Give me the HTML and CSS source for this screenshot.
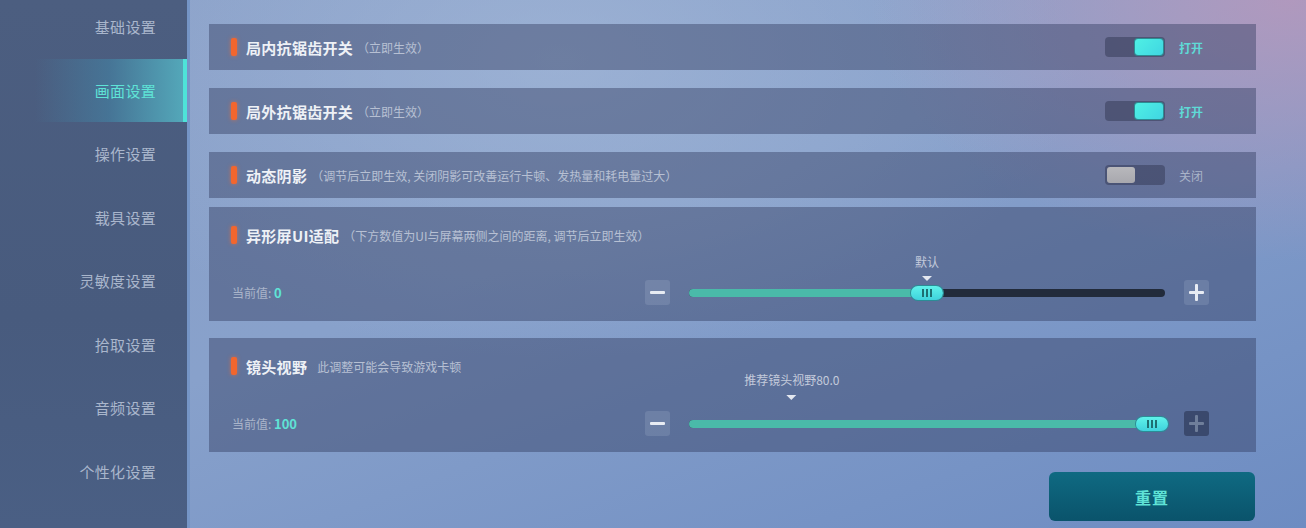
FILE: index.html
```html
<!DOCTYPE html>
<html lang="zh-CN">
<head>
    <meta charset="UTF-8">
    <meta name="viewport" content="width=device-width, initial-scale=1.0">
    <title>画面设置</title>
    <link rel="stylesheet" href="styles.css">
</head>
<body>
    <div class="screen">
        <!-- Left menu -->
        <nav class="sidebar">
            <ul class="menu">
                <li class="menu-item">基础设置</li>
                <li class="menu-item active">画面设置</li>
                <li class="menu-item">操作设置</li>
                <li class="menu-item">载具设置</li>
                <li class="menu-item">灵敏度设置</li>
                <li class="menu-item">拾取设置</li>
                <li class="menu-item">音频设置</li>
                <li class="menu-item">个性化设置</li>
            </ul>
        </nav>

        <main class="content">
            <!-- Toggle rows -->
            <section class="panel row first">
                <div class="panel-title">
                    <span class="mark"></span>
                    <h2>局内抗锯齿开关</h2>
                    <span class="hint">（立即生效）</span>
                </div>
                <div class="switch-group">
                    <span class="switch on"><span class="knob"></span></span>
                    <span class="switch-label on">打开</span>
                </div>
            </section>

            <section class="panel row">
                <div class="panel-title">
                    <span class="mark"></span>
                    <h2>局外抗锯齿开关</h2>
                    <span class="hint">（立即生效）</span>
                </div>
                <div class="switch-group">
                    <span class="switch on"><span class="knob"></span></span>
                    <span class="switch-label on">打开</span>
                </div>
            </section>

            <section class="panel row">
                <div class="panel-title">
                    <span class="mark"></span>
                    <h2>动态阴影</h2>
                    <span class="hint">（调节后立即生效, 关闭阴影可改善运行卡顿、发热量和耗电量过大）</span>
                </div>
                <div class="switch-group">
                    <span class="switch"><span class="knob"></span></span>
                    <span class="switch-label">关闭</span>
                </div>
            </section>

            <!-- Slider rows -->
            <section class="panel slider-panel notch">
                <div class="panel-title">
                    <span class="mark"></span>
                    <h2>异形屏UI适配</h2>
                    <span class="hint">（下方数值为UI与屏幕两侧之间的距离, 调节后立即生效）</span>
                </div>
                <div class="slider-row">
                    <div class="current">当前值: <b>0</b></div>
                    <div class="slider-controls">
                        <span class="step-btn minus"></span>
                        <div class="track">
                            <div class="fill" style="width: 50%"></div>
                            <div class="marker near" style="left: 50%">
                                <span class="marker-text">默认</span>
                                <span class="arrow"></span>
                            </div>
                            <div class="thumb" style="left: 50%"><i></i><i></i><i></i></div>
                        </div>
                        <span class="step-btn plus"></span>
                    </div>
                </div>
            </section>

            <section class="panel slider-panel fov">
                <div class="panel-title">
                    <span class="mark"></span>
                    <h2>镜头视野</h2>
                    <span class="hint plain">此调整可能会导致游戏卡顿</span>
                </div>
                <div class="slider-row">
                    <div class="current">当前值: <b>100</b></div>
                    <div class="slider-controls">
                        <span class="step-btn minus"></span>
                        <div class="track">
                            <div class="fill" style="width: 100%"></div>
                            <div class="marker far" style="left: 21.6%">
                                <span class="marker-text">推荐镜头视野80.0</span>
                                <span class="arrow"></span>
                            </div>
                            <div class="thumb" style="left: 97.2%"><i></i><i></i><i></i></div>
                        </div>
                        <span class="step-btn plus disabled"></span>
                    </div>
                </div>
            </section>

            <div class="actions">
                <button class="reset-btn">重置</button>
            </div>
        </main>
    </div>
</body>
</html>
```

FILE: styles.css
```css
* {
    box-sizing: border-box;
}
body {
    margin: 0;
    padding: 0;
    width: 1306px;
    height: 528px;
    overflow: hidden;
    font-family: "Noto Sans CJK SC", "Noto Sans", sans-serif;
    background: #7f98c4;
}
.screen {
    display: flex;
    width: 1306px;
    height: 528px;
    background:
        radial-gradient(ellipse 420px 260px at 1290px 0px, rgba(190, 150, 185, 0.75), rgba(190, 150, 185, 0) 100%),
        radial-gradient(ellipse 520px 300px at 560px 60px, rgba(170, 190, 220, 0.55), rgba(170, 190, 220, 0) 100%),
        linear-gradient(160deg, #8aa0c8 0%, #88a1cb 45%, #6d8cc2 100%);
}

/* sidebar */
.sidebar {
    width: 190px;
    flex-shrink: 0;
    background: linear-gradient(180deg, #4c5e80 0%, #485b7e 60%, #4a5f84 100%);
    border-right: 3px solid #7595c6;
}
.menu {
    list-style: none;
    margin: -5px 0 0 0;
    padding: 0;
}
.menu-item {
    height: 63.5px;
    display: flex;
    align-items: center;
    justify-content: flex-end;
    padding-right: 31px;
    font-size: 15px;
    color: #a9b6cc;
    letter-spacing: 0.3px;
}
.menu-item.active {
    color: #5fe3d6;
    margin-left: 35px;
    background: linear-gradient(90deg, rgba(70, 140, 170, 0) 0%, rgba(66, 135, 168, 0.55) 50%, rgba(85, 180, 195, 0.85) 100%);
    border-right: 4px solid #4ee3d9;
    padding-right: 27px;
}

/* content */
.content {
    flex: 1;
    padding: 24px 50px 0 19px;
    display: flex;
    flex-direction: column;
}
.panel {
    background: rgba(45, 55, 90, 0.42);
    margin-top: 18px;
}
.panel.first {
    margin-top: 0;
}
.panel.notch {
    margin-top: 9px;
}
.panel.fov {
    margin-top: 17px;
}
.row {
    height: 46px;
    display: flex;
    align-items: center;
    justify-content: space-between;
    padding: 0 53px 0 22px;
}
.panel-title {
    display: flex;
    align-items: center;
    height: 20px;
}
.mark {
    width: 6px;
    height: 18px;
    border-radius: 2px;
    background: #f2662e;
    box-shadow: 0 0 4px rgba(255, 110, 50, 0.6);
    margin-right: 9px;
}
.panel-title h2 {
    margin: 0;
    font-size: 15px;
    font-weight: bold;
    color: #eef1f6;
    letter-spacing: 0.3px;
}
.hint {
    font-size: 12px;
    color: #b7c0d3;
    margin-left: 4px;
}
.hint.plain {
    margin-left: 10px;
}

/* switches */
.switch-group {
    display: flex;
    align-items: center;
}
.switch {
    width: 60px;
    height: 20px;
    border-radius: 4px;
    background: rgba(55, 60, 90, 0.55);
    padding: 2px;
    display: flex;
}
.switch .knob {
    width: 28px;
    height: 16px;
    border-radius: 3px;
    background: linear-gradient(180deg, #b8b8bc, #a8a8ae);
}
.switch.on {
    justify-content: flex-end;
}
.switch.on .knob {
    background: linear-gradient(135deg, #4ff0e4, #40d6e2);
    box-shadow: 0 0 0 1px #2c8c92;
}
.switch-label {
    margin-left: 14px;
    font-size: 12px;
    color: #a9b4c9;
    width: 24px;
}
.switch-label.on {
    color: #5fd9d6;
    font-weight: bold;
}

/* sliders */
.slider-panel {
    height: 114px;
    padding: 18px 47px 0 22px;
    display: flex;
    flex-direction: column;
}
.slider-row {
    margin-top: 35px;
    height: 25px;
    display: flex;
    align-items: center;
    justify-content: space-between;
}
.current {
    font-size: 12px;
    color: #aab5ca;
    padding-left: 1px;
}
.current b {
    color: #5fe3d6;
    font-size: 13px;
}
.slider-controls {
    display: flex;
    align-items: center;
    gap: 19px;
}
.step-btn {
    position: relative;
    width: 25px;
    height: 25px;
    border-radius: 3px;
    background: rgba(200, 210, 230, 0.16);
}
.step-btn::before,
.step-btn.plus::after {
    content: "";
    position: absolute;
    left: 5px;
    top: 11px;
    width: 15px;
    height: 3px;
    border-radius: 1px;
    background: #e8ecf3;
}
.step-btn.plus::after {
    left: 11px;
    top: 4px;
    width: 3px;
    height: 17px;
}
.step-btn.disabled {
    background: rgba(40, 50, 80, 0.6);
}
.step-btn.disabled::before,
.step-btn.disabled::after {
    background: #6f7e9a;
}
.track {
    position: relative;
    width: 476px;
    height: 8px;
    border-radius: 4px;
    background: #222b3b;
}
.fill {
    height: 8px;
    border-radius: 4px;
    background: #4abaa9;
}
.thumb {
    position: absolute;
    top: -3px;
    width: 32px;
    height: 14px;
    margin-left: -16px;
    border-radius: 7px;
    background: linear-gradient(180deg, #5ff2ea, #3fd2dc);
    box-shadow: 0 0 0 1px #2b8d96;
    display: flex;
    align-items: center;
    justify-content: center;
    gap: 2px;
}
.thumb i {
    width: 2px;
    height: 8px;
    background: #1d6f72;
}
.marker {
    position: absolute;
    transform: translateX(-50%);
    display: flex;
    flex-direction: column;
    align-items: center;
    white-space: nowrap;
}
.marker.near {
    bottom: 16px;
}
.marker.far {
    bottom: 28px;
}
.marker-text {
    font-size: 12px;
    color: #c3cadb;
    line-height: 14px;
}
.arrow {
    margin-top: 7px;
    width: 0;
    height: 0;
    border-left: 5px solid transparent;
    border-right: 5px solid transparent;
    border-top: 5px solid #e4e8f0;
}
.marker.far .arrow {
    margin-top: 8px;
}

/* reset */
.actions {
    display: flex;
    justify-content: flex-end;
    margin-top: 20px;
}
.reset-btn {
    width: 206px;
    height: 49px;
    margin-right: 1px;
    border: none;
    border-radius: 6px;
    background: linear-gradient(180deg, #0f6a82 0%, #0a536b 100%);
    color: #5fe3d6;
    font-family: "Noto Sans CJK SC", sans-serif;
    font-size: 16px;
    font-weight: bold;
    letter-spacing: 1px;
}
```
